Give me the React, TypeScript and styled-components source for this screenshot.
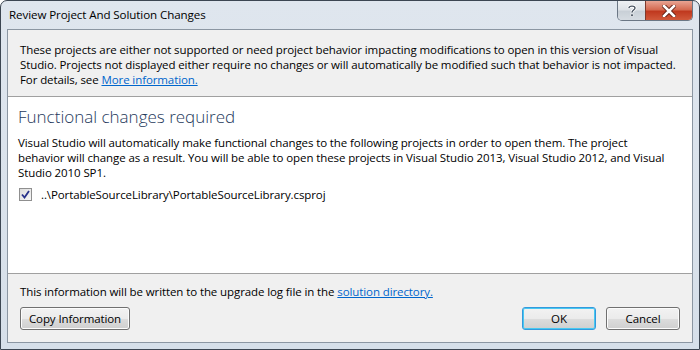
import React from 'react';
import styled, { createGlobalStyle } from 'styled-components';

const GlobalStyle = createGlobalStyle`
  html, body {
    margin: 0;
    padding: 0;
    background: #ffffff;
  }
  body {
    font-family: "Segoe UI", "Open Sans", "Noto Sans", sans-serif;
  }
`;

const Frame = styled.div`
  width: 700px;
  height: 350px;
  box-sizing: border-box;
  border: 1px solid #3c4652;
  border-radius: 7px 7px 0 0;
  background: linear-gradient(180deg, #dfe6ee 0%, #dbe3ec 40%, #d6dfe9 100%);
  display: flex;
  flex-direction: column;
  overflow: hidden;
`;

const TitleBar = styled.div`
  height: 28px;
  display: flex;
  align-items: flex-start;
  justify-content: space-between;
  padding-left: 8px;
  flex-shrink: 0;
`;

const Title = styled.span`
  font-size: 11.6px;
  color: #000;
  margin-top: 6px;
  letter-spacing: -0.1px;
`;

const CaptionButtons = styled.div`
  display: flex;
  margin-right: 6px;
  border: 1px solid #6b7785;
  border-top: none;
  border-radius: 0 0 5px 5px;
  overflow: hidden;
  height: 19px;
`;

const CaptionButton = styled.div<{ close?: boolean }>`
  width: ${(p) => (p.close ? '46px' : '27px')};
  height: 19px;
  display: flex;
  align-items: center;
  justify-content: center;
  background: ${(p) =>
    p.close
      ? 'linear-gradient(180deg, #e8a493 0%, #d46b52 45%, #c0391f 55%, #d1593b 100%)'
      : 'linear-gradient(180deg, #eef1f4 0%, #dde2e7 45%, #c9d0d7 55%, #d6dce2 100%)'};
  border-left: ${(p) => (p.close ? '1px solid #7d3a2c' : 'none')};
`;

const Client = styled.div`
  flex: 1;
  margin: 0 6px 6px 6px;
  border: 1px solid #8b96a2;
  background: #f0f0f0;
  display: flex;
  flex-direction: column;
  font-size: 11.5px;
  letter-spacing: -0.1px;
  color: #000;
`;

const InfoSection = styled.div`
  padding: 12px 12px 0 12px;
  height: 67px;
  box-sizing: border-box;
  border-bottom: 1px solid #a0a0a0;
`;

const Line = styled.div`
  white-space: nowrap;
  line-height: 15px;
`;

const Link = styled.a`
  color: #0066cc;
  text-decoration: underline;
`;

const ChangesSection = styled.div`
  flex: 1;
  background: #ffffff;
  padding: 8px 10px 0 10px;
  border-bottom: 1px solid #a0a0a0;
`;

const Heading = styled.div`
  font-size: 17px;
  font-weight: 300;
  color: #1e395b;
  line-height: 24px;
  letter-spacing: 0;
  margin-bottom: 6px;
`;

const CheckRow = styled.label`
  display: flex;
  align-items: center;
  gap: 9px;
  margin-top: 7px;
  line-height: 15px;
`;

const Box = styled.span`
  width: 11px;
  height: 11px;
  border: 1px solid #8f8f8f;
  background: linear-gradient(135deg, #dcdcdc 0%, #f6f6f6 100%);
  display: flex;
  align-items: center;
  justify-content: center;
  margin-left: 1px;
`;

const Footer = styled.div`
  height: 68px;
  box-sizing: border-box;
  padding: 10px 12px 0 12px;
  display: flex;
  flex-direction: column;
  gap: 8px;
`;

const ButtonRow = styled.div`
  display: flex;
  align-items: center;
`;

const Spacer = styled.div`
  flex: 1;
`;

const Button = styled.button<{ w: number; primary?: boolean }>`
  width: ${(p) => p.w}px;
  height: 23px;
  box-sizing: border-box;
  font-family: inherit;
  font-size: 11.5px;
  letter-spacing: -0.1px;
  color: #000;
  border-radius: 3px;
  border: 1px solid ${(p) => (p.primary ? '#3399dd' : '#707070')};
  box-shadow: ${(p) => (p.primary ? 'inset 0 0 0 1px #48c8f0' : 'inset 0 0 0 1px #fcfcfc')};
  background: linear-gradient(180deg, #f2f2f2 0%, #ebebeb 50%, #dddddd 51%, #cfcfcf 100%);
  padding: 0;
`;

const Gap = styled.div<{ w: number }>`
  width: ${(p) => p.w}px;
`;

export default function App() {
  return (
    <>
      <GlobalStyle />
      <Frame>
        <TitleBar>
          <Title>Review Project And Solution Changes</Title>
          <CaptionButtons>
            <CaptionButton>
              <svg width="10" height="13" viewBox="0 0 10 13">
                <path
                  d="M2 4 C2 1.5 8 1.5 8 4 C8 6 5 6 5 8.5"
                  fill="none"
                  stroke="#ffffff"
                  strokeWidth="3"
                />
                <path
                  d="M2 4 C2 1.5 8 1.5 8 4 C8 6 5 6 5 8.5"
                  fill="none"
                  stroke="#4a5562"
                  strokeWidth="1.4"
                />
                <rect x="3.8" y="10" width="2.4" height="2.4" fill="#4a5562" stroke="#fff" strokeWidth="0.6" />
              </svg>
            </CaptionButton>
            <CaptionButton close>
              <svg width="14" height="12" viewBox="0 0 14 12">
                <path d="M2 1 L12 11 M12 1 L2 11" stroke="#5b1d12" strokeWidth="4.4" strokeLinecap="square" />
                <path d="M2 1 L12 11 M12 1 L2 11" stroke="#ffffff" strokeWidth="2.6" strokeLinecap="square" />
              </svg>
            </CaptionButton>
          </CaptionButtons>
        </TitleBar>
        <Client>
          <InfoSection>
            <Line>
              These projects are either not supported or need project behavior impacting modifications to open in this version of Visual
            </Line>
            <Line>
              Studio. Projects not displayed either require no changes or will automatically be modified such that behavior is not impacted.
            </Line>
            <Line>
              For details, see <Link href="#">More information.</Link>
            </Line>
          </InfoSection>
          <ChangesSection>
            <Heading>Functional changes required</Heading>
            <Line>
              Visual Studio will automatically make functional changes to the following projects in order to open them. The project
            </Line>
            <Line>
              behavior will change as a result. You will be able to open these projects in Visual Studio 2013, Visual Studio 2012, and Visual
            </Line>
            <Line>Studio 2010 SP1.</Line>
            <CheckRow>
              <Box>
                <svg width="9" height="9" viewBox="0 0 9 9">
                  <path d="M1 4.5 L3.5 7.5 L8 1" fill="none" stroke="#27318a" strokeWidth="1.8" />
                </svg>
              </Box>
              <span>..\PortableSourceLibrary\PortableSourceLibrary.csproj</span>
            </CheckRow>
          </ChangesSection>
          <Footer>
            <Line>
              This information will be written to the upgrade log file in the <Link href="#">solution directory.</Link>
            </Line>
            <ButtonRow>
              <Button w={110}>Copy Information</Button>
              <Spacer />
              <Button w={74} primary>OK</Button>
              <Gap w={10} />
              <Button w={74}>Cancel</Button>
            </ButtonRow>
          </Footer>
        </Client>
      </Frame>
    </>
  );
}
